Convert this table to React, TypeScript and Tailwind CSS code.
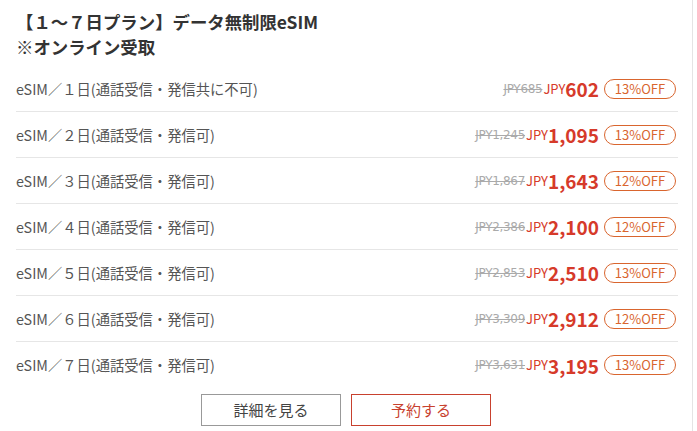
const plans = [
  { label: "eSIM／１日(通話受信・発信共に不可)", was: "JPY685", now: "602", off: "13%OFF" },
  { label: "eSIM／２日(通話受信・発信可)", was: "JPY1,245", now: "1,095", off: "13%OFF" },
  { label: "eSIM／３日(通話受信・発信可)", was: "JPY1,867", now: "1,643", off: "12%OFF" },
  { label: "eSIM／４日(通話受信・発信可)", was: "JPY2,386", now: "2,100", off: "12%OFF" },
  { label: "eSIM／５日(通話受信・発信可)", was: "JPY2,853", now: "2,510", off: "13%OFF" },
  { label: "eSIM／６日(通話受信・発信可)", was: "JPY3,309", now: "2,912", off: "12%OFF" },
  { label: "eSIM／７日(通話受信・発信可)", was: "JPY3,631", now: "3,195", off: "13%OFF" },
];

export default function App() {
  return (
    <div
      className="w-[697px] h-[431px] bg-white overflow-hidden"
      style={{ fontFamily: '"Noto Sans CJK JP", "Noto Sans", sans-serif' }}
    >
      <div className="w-[693px] h-full border-r border-[#e4e4e4] pl-[16px] pr-[14px] pt-[9px]">
        {/* heading */}
        <h2 className="text-[17.4px] leading-[25px] font-bold text-[#333]">
          【１～７日プラン】データ無制限eSIM
          <br />
          ※オンライン受取
        </h2>

        {/* plan rows */}
        <ul className="mt-[7px]">
          {plans.map((p, i) => (
            <li
              key={i}
              className={
                "h-[46px] flex items-center justify-between pr-[2px] " +
                (i < plans.length - 1 ? "border-b border-[#e6e6e6]" : "")
              }
            >
              <span className="text-[14.3px] text-[#555]">{p.label}</span>
              <span className="flex items-center">
                <span className="text-[12px] text-[#aaa] line-through font-['DejaVu_Sans',sans-serif] tracking-[-0.3px]">
                  {p.was}
                </span>
                <span className="ml-[1px] text-[13px] text-[#d63a2a]">JPY</span>
                <span className="text-[19px] font-bold text-[#d63a2a] leading-none">{p.now}</span>
                <span className="ml-[5px] h-[20px] w-[72px] flex items-center justify-center rounded-full border border-[#d9652e] text-[13px] text-[#d9652e]">
                  {p.off}
                </span>
              </span>
            </li>
          ))}
        </ul>

        {/* buttons */}
        <div className="flex justify-center gap-[10px] mt-[6px] pr-[2px]">
          <button className="w-[140px] h-[32px] border border-[#999] bg-white text-[15px] text-[#444]">
            詳細を見る
          </button>
          <button className="w-[140px] h-[32px] border border-[#c8412e] bg-white text-[15px] text-[#c8412e]">
            予約する
          </button>
        </div>
      </div>
    </div>
  );
}
